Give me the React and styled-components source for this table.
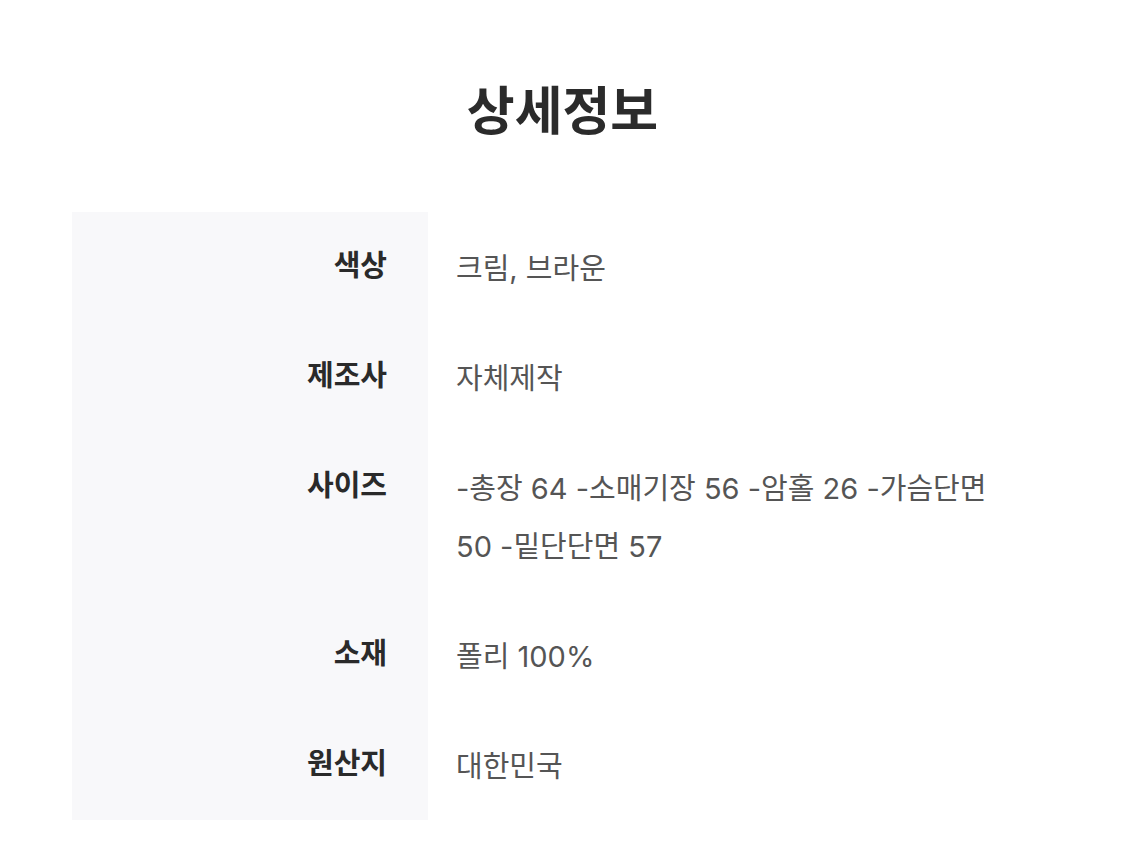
import React from 'react'
import styled, { createGlobalStyle } from 'styled-components'

const GlobalStyle = createGlobalStyle`
  body {
    margin: 0;
    background: #ffffff;
    font-family: "Inter", "Noto Sans CJK KR", "Noto Sans", sans-serif;
    -webkit-font-smoothing: antialiased;
  }
`;

const details = [
  { label: '색상', value: '크림, 브라운' },
  { label: '제조사', value: '자체제작' },
  { label: '사이즈', value: '-총장 64 -소매기장 56 -암홀 26 -가슴단면 50 -밑단단면 57' },
  { label: '소재', value: '폴리 100%' },
  { label: '원산지', value: '대한민국' },
];

function App() {
  return (
    <DetailStyled>
      <GlobalStyle />
      <h1 className="title">상세정보</h1>
      <div className="info-table">
        {details.map(({ label, value }) => (
          <InfoRow key={label}>
            <RowLabel>{label}</RowLabel>
            <RowValue>{value}</RowValue>
          </InfoRow>
        ))}
      </div>
    </DetailStyled>
  )
}

const DetailStyled = styled.section`
  width: 981px;
  margin: 0 auto;
  padding: 80px 0 24px;
  .title {
    margin: 0 0 68px;
    text-align: center;
    font-size: 52px;
    line-height: 64px;
    font-weight: 700;
    color: #2b2b2b;
  }
  .info-table {
    display: flex;
    flex-direction: column;
  }
`;

const InfoRow = styled.div`
  display: flex;
  align-items: stretch;
`;

const RowLabel = styled.div`
  flex: 0 0 356px;
  box-sizing: border-box;
  padding: 25px 41px 27px 0;
  background: #f8f8fa;
  text-align: right;
  font-size: 29px;
  line-height: 58px;
  font-weight: 700;
  color: #2a2a2a;
`;

const RowValue = styled.div`
  flex: 1;
  box-sizing: border-box;
  padding: 28px 50px 24px 28px;
  font-size: 29px;
  line-height: 58px;
  font-weight: 400;
  color: #555555;
  word-break: keep-all;
`;

export default App
